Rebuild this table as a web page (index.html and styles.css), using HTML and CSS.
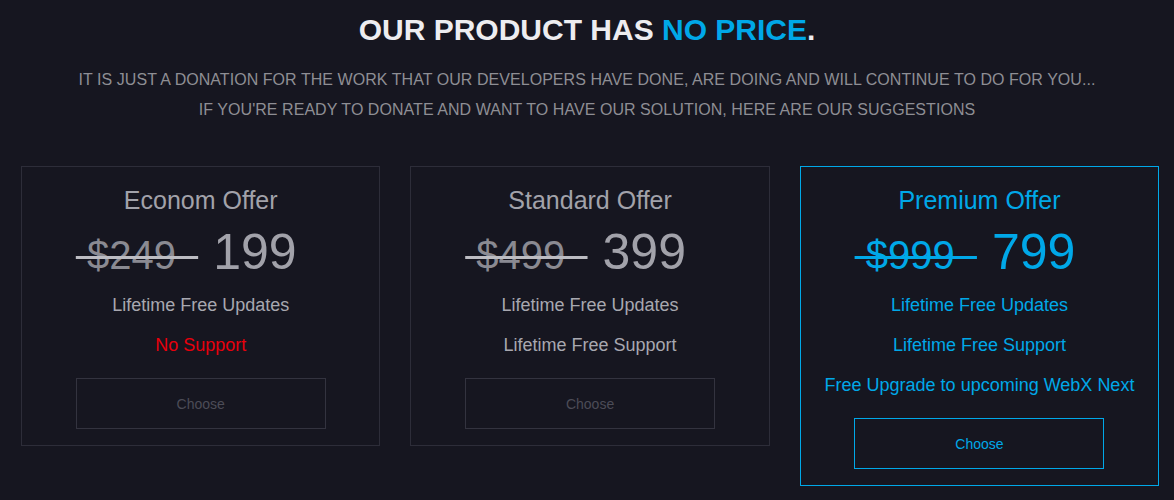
FILE: index.html
```html
<!DOCTYPE html>
<html lang="en">
<head>
<meta charset="utf-8">
<title>Pricing</title>
<link rel="stylesheet" href="styles.css">
</head>
<body>
<section class="pricing">
  <h1 class="headline">OUR PRODUCT HAS <span class="accent">NO PRICE</span>.</h1>
  <p class="lead">IT IS JUST A DONATION FOR THE WORK THAT OUR DEVELOPERS HAVE DONE, ARE DOING AND WILL CONTINUE TO DO FOR YOU...<br>IF YOU'RE READY TO DONATE AND WANT TO HAVE OUR SOLUTION, HERE ARE OUR SUGGESTIONS</p>
  <div class="plans">
    <div class="plan">
      <h2 class="plan-title">Econom Offer</h2>
      <div class="price"><del class="old">&nbsp;$249&nbsp;&nbsp;</del><span class="new">199</span></div>
      <div class="feature">Lifetime Free Updates</div>
      <div class="feature missing">No Support</div>
      <button class="choose">Choose</button>
    </div>
    <div class="plan">
      <h2 class="plan-title">Standard Offer</h2>
      <div class="price"><del class="old">&nbsp;$499&nbsp;&nbsp;</del><span class="new">399</span></div>
      <div class="feature">Lifetime Free Updates</div>
      <div class="feature">Lifetime Free Support</div>
      <button class="choose">Choose</button>
    </div>
    <div class="plan premium">
      <h2 class="plan-title">Premium Offer</h2>
      <div class="price"><del class="old">&nbsp;$999&nbsp;&nbsp;</del><span class="new">799</span></div>
      <div class="feature">Lifetime Free Updates</div>
      <div class="feature">Lifetime Free Support</div>
      <div class="feature">Free Upgrade to upcoming WebX Next</div>
      <button class="choose">Choose</button>
    </div>
  </div>
</section>
</body>
</html>
```
FILE: styles.css
```css
html, body {
  margin: 0;
  padding: 0;
  background: #161620;
}
body {
  font-family: "Liberation Sans", Arial, sans-serif;
  color: #a2a2aa;
}
.pricing {
  padding-top: 10px;
  text-align: center;
}
.headline {
  margin: 0;
  font-size: 30px;
  line-height: 40px;
  font-weight: bold;
  color: #ededf0;
}
.accent {
  color: #00a8e8;
}
.lead {
  margin: 15px 0 0;
  font-family: "Liberation Sans", Arial, sans-serif;
  font-size: 16px;
  line-height: 30px;
  letter-spacing: 0.05px;
  color: #8e8e94;
}
.plans {
  display: flex;
  align-items: flex-start;
  gap: 30px;
  margin-top: 41px;
  padding-left: 21px;
}
.plan {
  box-sizing: border-box;
  width: 359.4px;
  border: 1px solid #2d2d39;
  padding: 16px 0 16px;
  display: flex;
  flex-direction: column;
  align-items: center;
}
.plan-title {
  margin: 0;
  font-size: 25px;
  line-height: 34px;
  font-weight: normal;
  color: #a2a2aa;
}
.price {
  margin-top: 5px;
  line-height: 60px;
  height: 60px;
  padding-right: 29px;
  white-space: nowrap;
}
.old {
  font-size: 40px;
  color: #8a8a92;
  text-decoration: line-through;
  text-decoration-thickness: 3px;
  text-decoration-color: #bcbcc2;
}
.new {
  font-size: 50px;
  margin-left: 15px;
  color: #a2a2aa;
}
.feature {
  font-size: 18px;
  line-height: 40px;
  color: #a8a8b0;
}
.price + .feature {
  margin-top: 3px;
}
.feature.missing {
  color: #e8000c;
}
.choose {
  box-sizing: border-box;
  margin-top: 13px;
  width: 250px;
  height: 51px;
  background: transparent;
  border: 1px solid #33333f;
  font-family: "Liberation Sans", Arial, sans-serif;
  font-size: 14px;
  color: #4c4c57;
  padding: 0;
}
.premium {
  border-color: #00a8e8;
}
.premium .plan-title,
.premium .old,
.premium .new,
.premium .feature,
.premium .choose {
  color: #00a8e8;
}
.premium .old {
  text-decoration-color: #00a8e8;
}
.premium .choose {
  border-color: #00a8e8;
}
```
